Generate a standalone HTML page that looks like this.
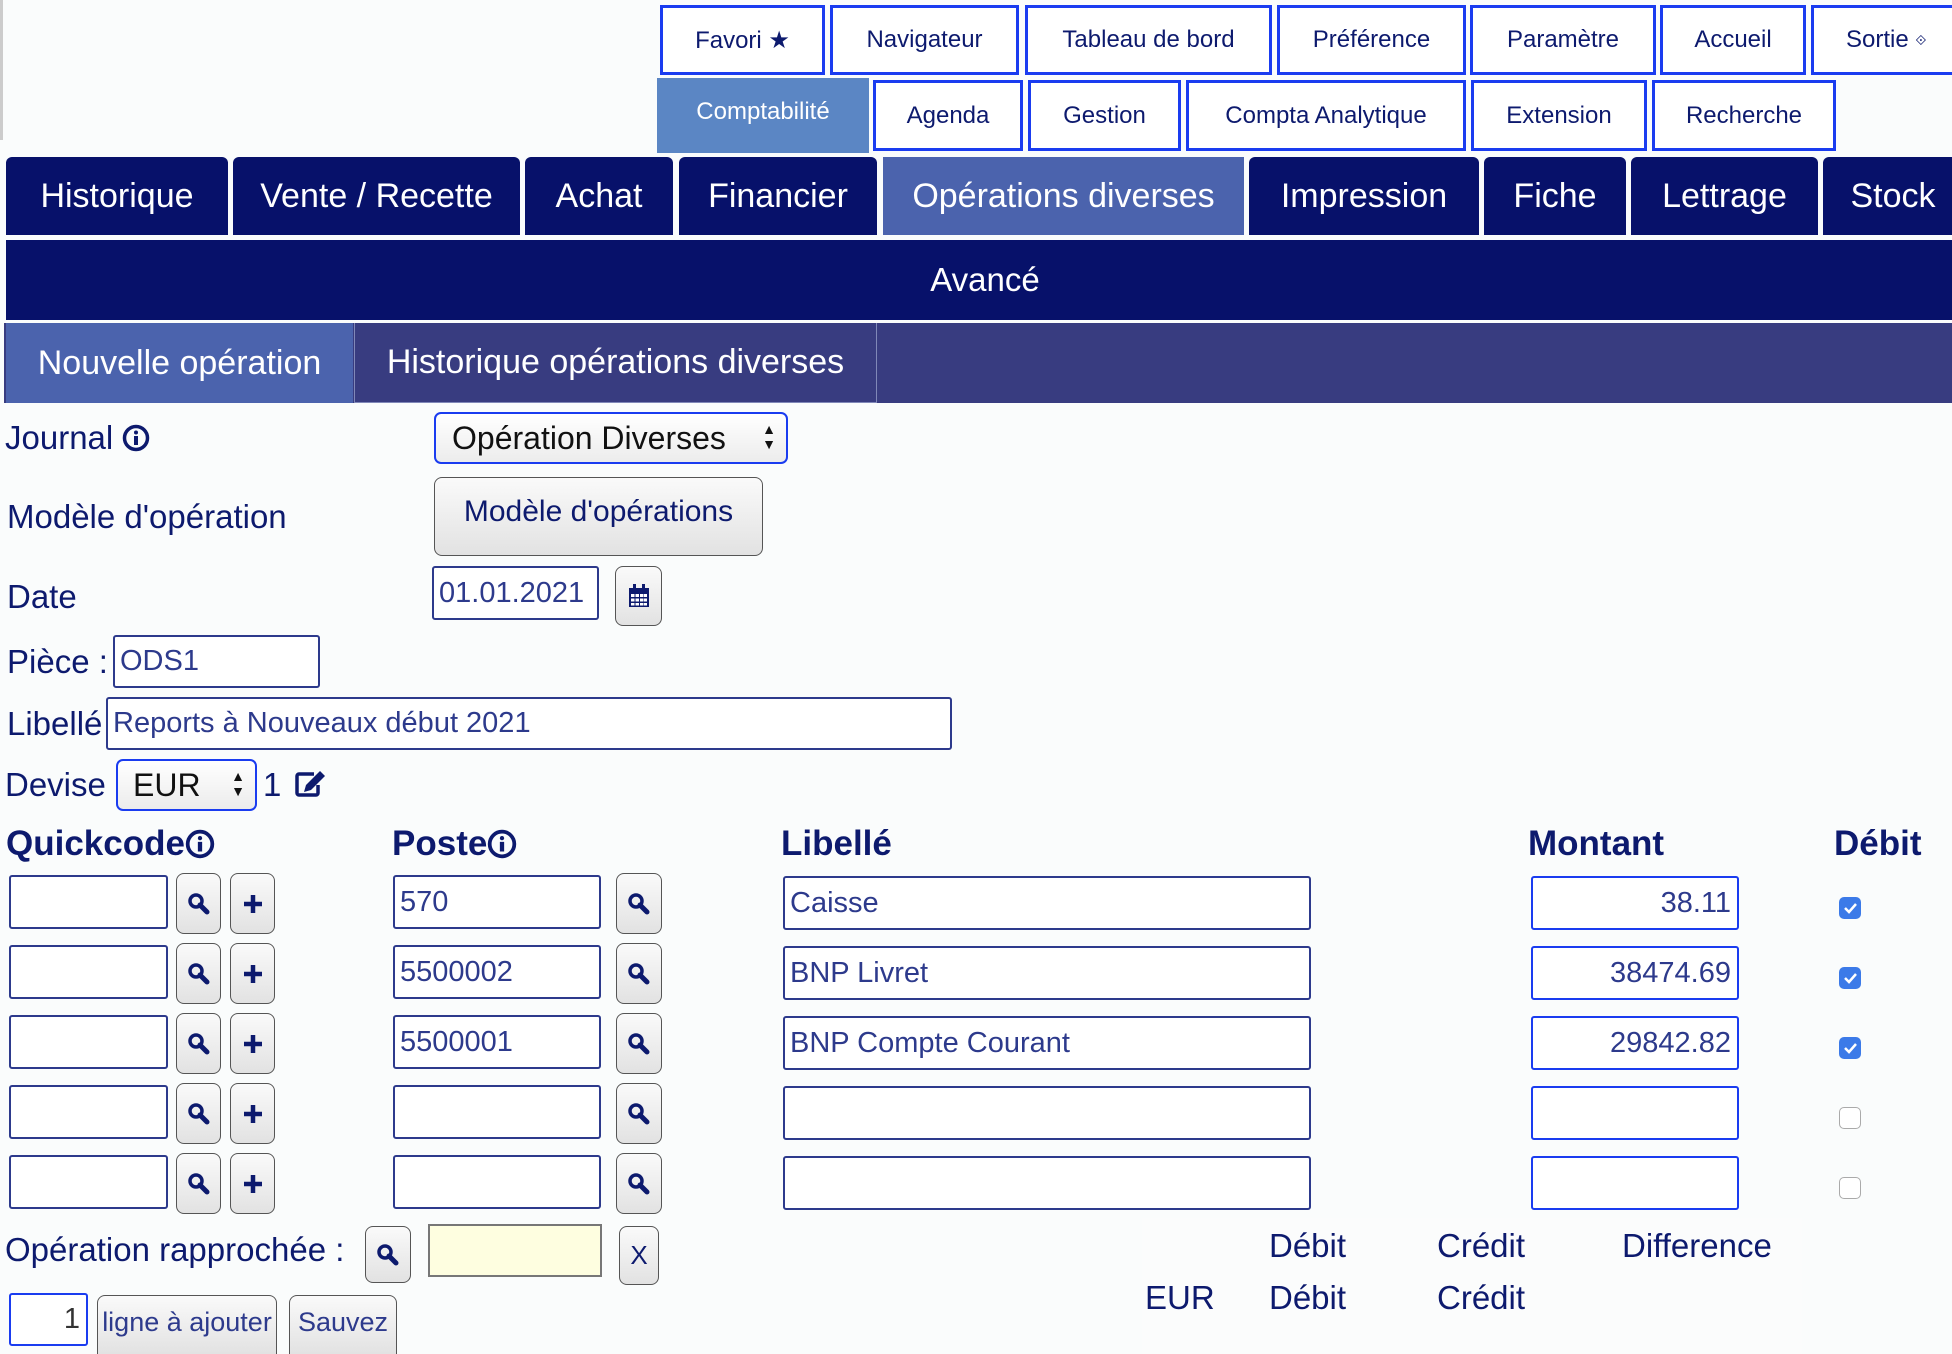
<!DOCTYPE html>
<html><head><meta charset="utf-8"><style>
*{box-sizing:border-box;margin:0;padding:0}
html,body{width:1952px;height:1354px;overflow:hidden}
body{background:#fafcfc;font-family:"Liberation Sans",sans-serif;color:#0d1a6e;position:relative}
.a{position:absolute}
.tn{position:absolute;border:3px solid #1a3cf0;background:#fff;color:#0d1a6e;font-size:24px;display:flex;align-items:center;justify-content:center}
.mt{position:absolute;top:157px;height:78px;background:#07116a;color:#fff;font-size:34px;display:flex;align-items:center;justify-content:center;border-radius:6px 6px 0 0}
.lbl{position:absolute;font-size:33px;color:#0d1a6e;line-height:1}
.in{position:absolute;border:2px solid #2d3a8c;border-radius:3px;background:#fff;font-size:29px;color:#2d3a8c;display:flex;align-items:center;padding-left:5px}
.inb{border-color:#1a3cf0}
.btn{position:absolute;border:1.5px solid #555;border-radius:8px;background:linear-gradient(#fafafa,#e2e2e2);display:flex;align-items:center;justify-content:center;color:#0d1a6e}
.hd{position:absolute;top:824px;font-size:35px;font-weight:bold;color:#0d1a6e}
.cb{position:absolute;width:22px;height:22px;border-radius:5px}
.on{background:#3b7ae8}
.off{border:1.5px solid #aaa;background:#fff}
</style></head><body>
<div class="a" style="left:0;top:0;width:3px;height:140px;background:#ccc"></div>
<div class="tn" style="left:660px;top:5px;width:165px;height:70px">Favori&nbsp;★</div>
<div class="tn" style="left:830px;top:5px;width:189px;height:70px">Navigateur</div>
<div class="tn" style="left:1025px;top:5px;width:247px;height:70px">Tableau de bord</div>
<div class="tn" style="left:1277px;top:5px;width:189px;height:70px">Préférence</div>
<div class="tn" style="left:1470px;top:5px;width:186px;height:70px">Paramètre</div>
<div class="tn" style="left:1660px;top:5px;width:146px;height:70px">Accueil</div>
<div class="tn" style="left:1811px;top:5px;width:150px;height:70px;justify-content:flex-start;padding-left:32px">Sortie&nbsp;<span style="font-size:14px">⟐</span></div>
<div class="tn" style="left:657px;top:78px;width:212px;height:75px;background:#5b86c4;border:none;color:#fff;padding-bottom:8px">Comptabilité</div>
<div class="tn" style="left:873px;top:80px;width:150px;height:71px">Agenda</div>
<div class="tn" style="left:1028px;top:80px;width:153px;height:71px">Gestion</div>
<div class="tn" style="left:1186px;top:80px;width:280px;height:71px">Compta Analytique</div>
<div class="tn" style="left:1471px;top:80px;width:176px;height:71px">Extension</div>
<div class="tn" style="left:1652px;top:80px;width:184px;height:71px">Recherche</div>
<div class="mt" style="left:6px;width:222px">Historique</div>
<div class="mt" style="left:233px;width:287px">Vente / Recette</div>
<div class="mt" style="left:525px;width:148px">Achat</div>
<div class="mt" style="left:679px;width:198px">Financier</div>
<div class="mt" style="left:883px;width:361px;background:#4b63ad;border-radius:0">Opérations diverses</div>
<div class="mt" style="left:1249px;width:230px">Impression</div>
<div class="mt" style="left:1484px;width:142px">Fiche</div>
<div class="mt" style="left:1631px;width:187px">Lettrage</div>
<div class="mt" style="left:1823px;width:140px">Stock</div>
<div class="a" style="left:6px;top:240px;width:1946px;height:80px;background:#07116a;color:#fff;font-size:33px;display:flex;align-items:center;justify-content:center;padding-left:12px">Avancé</div>
<div class="a" style="left:4px;top:323px;width:1948px;height:80px;background:#383c80"></div>
<div class="a" style="left:6px;top:323px;width:347px;height:80px;background:#4b63ad;color:#fff;font-size:34px;display:flex;align-items:center;justify-content:center">Nouvelle opération</div>
<div class="a" style="left:354px;top:323px;width:523px;height:80px;border:1px solid #8088b8;border-top:none;color:#fff;font-size:34px;display:flex;align-items:center;justify-content:center">Historique opérations diverses</div>
<div class="lbl" style="left:5px;top:421px">Journal <svg width="28" height="28" viewBox="0 0 28 28" style="vertical-align:-3px"><circle cx="14" cy="14" r="11.5" fill="none" stroke="#0d1a6e" stroke-width="3.5"/><circle cx="14" cy="8.5" r="2" fill="#0d1a6e"/><rect x="12" y="12" width="4" height="9" fill="#0d1a6e"/></svg></div>
<div class="a" style="left:434px;top:412px;width:354px;height:52px;border:2.5px solid #1a3cf0;border-radius:7px;background:linear-gradient(#fff,#ececec);font-size:32px;color:#111;display:flex;align-items:center;padding-left:16px">Opération Diverses<span style="position:absolute;right:10px;top:8px;font-size:14px;line-height:15px">▲<br>▼</span></div>
<div class="lbl" style="left:7px;top:500px">Modèle d'opération</div>
<div class="btn" style="left:434px;top:477px;width:329px;height:79px;font-size:30px;align-items:flex-start;padding-top:17px">Modèle d'opérations</div>
<div class="lbl" style="left:7px;top:580px">Date</div>
<div class="in" style="left:432px;top:566px;width:167px;height:54px">01.01.2021</div>
<div class="btn" style="left:615px;top:566px;width:47px;height:60px"><svg width="22" height="24" viewBox="0 0 22 24"><rect x="1" y="4" width="20" height="19" fill="#0d1a6e"/><rect x="5" y="0" width="3" height="7" fill="#0d1a6e"/><rect x="14" y="0" width="3" height="7" fill="#0d1a6e"/><g fill="#fff"><rect x="3" y="10" width="3.5" height="3"/><rect x="7.5" y="10" width="3.5" height="3"/><rect x="12" y="10" width="3.5" height="3"/><rect x="16" y="10" width="3" height="3"/><rect x="3" y="14.5" width="3.5" height="3"/><rect x="7.5" y="14.5" width="3.5" height="3"/><rect x="12" y="14.5" width="3.5" height="3"/><rect x="16" y="14.5" width="3" height="3"/><rect x="3" y="19" width="3.5" height="2.5"/><rect x="7.5" y="19" width="3.5" height="2.5"/><rect x="12" y="19" width="3.5" height="2.5"/><rect x="16" y="19" width="3" height="2.5"/></g></svg></div>
<div class="lbl" style="left:7px;top:645px">Pièce :</div>
<div class="in" style="left:113px;top:635px;width:207px;height:53px">ODS1</div>
<div class="lbl" style="left:7px;top:707px">Libellé</div>
<div class="in" style="left:106px;top:697px;width:846px;height:53px">Reports à Nouveaux début 2021</div>
<div class="lbl" style="left:5px;top:768px">Devise</div>
<div class="a" style="left:116px;top:759px;width:141px;height:52px;border:2.5px solid #1a3cf0;border-radius:7px;background:linear-gradient(#fff,#ececec);font-size:32px;color:#111;display:flex;align-items:center;padding-left:15px">EUR<span style="position:absolute;right:10px;top:8px;font-size:14px;line-height:15px">▲<br>▼</span></div>
<div class="lbl" style="left:263px;top:768px">1</div>
<svg class="a" style="left:294px;top:770px" width="32" height="28" viewBox="0 0 32 28"><path d="M20 4H5a2 2 0 0 0-2 2v17a2 2 0 0 0 2 2h17a2 2 0 0 0 2-2v-8" fill="none" stroke="#0d1a6e" stroke-width="3.5"/><path d="M26 1l5 5-14 14-7 2 2-7z" fill="#0d1a6e"/></svg>
<div class="hd" style="left:6px">Quickcode<svg width="30" height="30" viewBox="0 0 28 28" style="vertical-align:-4px"><circle cx="14" cy="14" r="11.5" fill="none" stroke="#0d1a6e" stroke-width="3.5"/><circle cx="14" cy="8.5" r="2" fill="#0d1a6e"/><rect x="12" y="12" width="4" height="9" fill="#0d1a6e"/></svg></div>
<div class="hd" style="left:392px">Poste<svg width="30" height="30" viewBox="0 0 28 28" style="vertical-align:-4px"><circle cx="14" cy="14" r="11.5" fill="none" stroke="#0d1a6e" stroke-width="3.5"/><circle cx="14" cy="8.5" r="2" fill="#0d1a6e"/><rect x="12" y="12" width="4" height="9" fill="#0d1a6e"/></svg></div>
<div class="hd" style="left:781px">Libellé</div>
<div class="hd" style="left:1528px">Montant</div>
<div class="hd" style="left:1834px">Débit</div>
<svg width="0" height="0" style="position:absolute"><defs><symbol id="mg" viewBox="0 0 24 24"><circle cx="9" cy="9" r="6" fill="none" stroke="#0d1a6e" stroke-width="3.5"/><path d="M13 13l7 7" stroke="#0d1a6e" stroke-width="5" stroke-linecap="round"/></symbol><symbol id="pl" viewBox="0 0 24 24"><path d="M12 3v18M3 12h18" stroke="#0d1a6e" stroke-width="4.5"/></symbol></defs></svg>
<div class="in" style="left:9px;top:875px;width:159px;height:54px"></div>
<div class="btn" style="left:176px;top:873px;width:45px;height:61px"><svg width="24" height="24"><use href="#mg"/></svg></div>
<div class="btn" style="left:230px;top:873px;width:45px;height:61px"><svg width="24" height="24"><use href="#pl"/></svg></div>
<div class="in" style="left:393px;top:875px;width:208px;height:54px">570</div>
<div class="btn" style="left:616px;top:873px;width:46px;height:61px"><svg width="24" height="24"><use href="#mg"/></svg></div>
<div class="in" style="left:783px;top:876px;width:528px;height:54px">Caisse</div>
<div class="in inb" style="left:1531px;top:876px;width:208px;height:54px;justify-content:flex-end;padding-right:6px">38.11</div>
<div class="cb on" style="left:1839px;top:897px"><svg width="22" height="22"><path d="M6 11l4 4 7-8" fill="none" stroke="#fff" stroke-width="2.5"/></svg></div>
<div class="in" style="left:9px;top:945px;width:159px;height:54px"></div>
<div class="btn" style="left:176px;top:943px;width:45px;height:61px"><svg width="24" height="24"><use href="#mg"/></svg></div>
<div class="btn" style="left:230px;top:943px;width:45px;height:61px"><svg width="24" height="24"><use href="#pl"/></svg></div>
<div class="in" style="left:393px;top:945px;width:208px;height:54px">5500002</div>
<div class="btn" style="left:616px;top:943px;width:46px;height:61px"><svg width="24" height="24"><use href="#mg"/></svg></div>
<div class="in" style="left:783px;top:946px;width:528px;height:54px">BNP Livret</div>
<div class="in inb" style="left:1531px;top:946px;width:208px;height:54px;justify-content:flex-end;padding-right:6px">38474.69</div>
<div class="cb on" style="left:1839px;top:967px"><svg width="22" height="22"><path d="M6 11l4 4 7-8" fill="none" stroke="#fff" stroke-width="2.5"/></svg></div>
<div class="in" style="left:9px;top:1015px;width:159px;height:54px"></div>
<div class="btn" style="left:176px;top:1013px;width:45px;height:61px"><svg width="24" height="24"><use href="#mg"/></svg></div>
<div class="btn" style="left:230px;top:1013px;width:45px;height:61px"><svg width="24" height="24"><use href="#pl"/></svg></div>
<div class="in" style="left:393px;top:1015px;width:208px;height:54px">5500001</div>
<div class="btn" style="left:616px;top:1013px;width:46px;height:61px"><svg width="24" height="24"><use href="#mg"/></svg></div>
<div class="in" style="left:783px;top:1016px;width:528px;height:54px">BNP Compte Courant</div>
<div class="in inb" style="left:1531px;top:1016px;width:208px;height:54px;justify-content:flex-end;padding-right:6px">29842.82</div>
<div class="cb on" style="left:1839px;top:1037px"><svg width="22" height="22"><path d="M6 11l4 4 7-8" fill="none" stroke="#fff" stroke-width="2.5"/></svg></div>
<div class="in" style="left:9px;top:1085px;width:159px;height:54px"></div>
<div class="btn" style="left:176px;top:1083px;width:45px;height:61px"><svg width="24" height="24"><use href="#mg"/></svg></div>
<div class="btn" style="left:230px;top:1083px;width:45px;height:61px"><svg width="24" height="24"><use href="#pl"/></svg></div>
<div class="in" style="left:393px;top:1085px;width:208px;height:54px"></div>
<div class="btn" style="left:616px;top:1083px;width:46px;height:61px"><svg width="24" height="24"><use href="#mg"/></svg></div>
<div class="in" style="left:783px;top:1086px;width:528px;height:54px"></div>
<div class="in inb" style="left:1531px;top:1086px;width:208px;height:54px"></div>
<div class="cb off" style="left:1839px;top:1107px"></div>
<div class="in" style="left:9px;top:1155px;width:159px;height:54px"></div>
<div class="btn" style="left:176px;top:1153px;width:45px;height:61px"><svg width="24" height="24"><use href="#mg"/></svg></div>
<div class="btn" style="left:230px;top:1153px;width:45px;height:61px"><svg width="24" height="24"><use href="#pl"/></svg></div>
<div class="in" style="left:393px;top:1155px;width:208px;height:54px"></div>
<div class="btn" style="left:616px;top:1153px;width:46px;height:61px"><svg width="24" height="24"><use href="#mg"/></svg></div>
<div class="in" style="left:783px;top:1156px;width:528px;height:54px"></div>
<div class="in inb" style="left:1531px;top:1156px;width:208px;height:54px"></div>
<div class="cb off" style="left:1839px;top:1177px"></div>
<div class="lbl" style="left:5px;top:1233px">Opération rapprochée :</div>
<div class="btn" style="left:365px;top:1226px;width:46px;height:57px"><svg width="24" height="24"><use href="#mg"/></svg></div>
<div class="a" style="left:428px;top:1224px;width:174px;height:53px;background:#fefee0;border:2px solid #777"></div>
<div class="btn" style="left:619px;top:1226px;width:40px;height:59px;font-size:26px">X</div>
<div class="a" style="left:1142px;top:1218px;width:660px;height:136px;background:#fbfcfc"></div>
<div class="lbl" style="left:1269px;top:1229px">Débit</div>
<div class="lbl" style="left:1437px;top:1229px">Crédit</div>
<div class="lbl" style="left:1622px;top:1229px">Difference</div>
<div class="lbl" style="left:1145px;top:1281px">EUR</div>
<div class="lbl" style="left:1269px;top:1281px">Débit</div>
<div class="lbl" style="left:1437px;top:1281px">Crédit</div>
<div class="in inb" style="left:9px;top:1293px;width:79px;height:53px;justify-content:flex-end;padding-right:6px;font-size:29px;color:#333">1</div>
<div class="btn" style="left:97px;top:1295px;width:180px;height:59px;border-bottom:none;border-radius:8px 8px 0 0;font-size:27px;align-items:flex-start;padding-top:11px;color:#2d3a8c">ligne à ajouter</div>
<div class="btn" style="left:289px;top:1295px;width:108px;height:59px;border-bottom:none;border-radius:8px 8px 0 0;font-size:27px;align-items:flex-start;padding-top:11px;color:#2d3a8c">Sauvez</div>
</body></html>
